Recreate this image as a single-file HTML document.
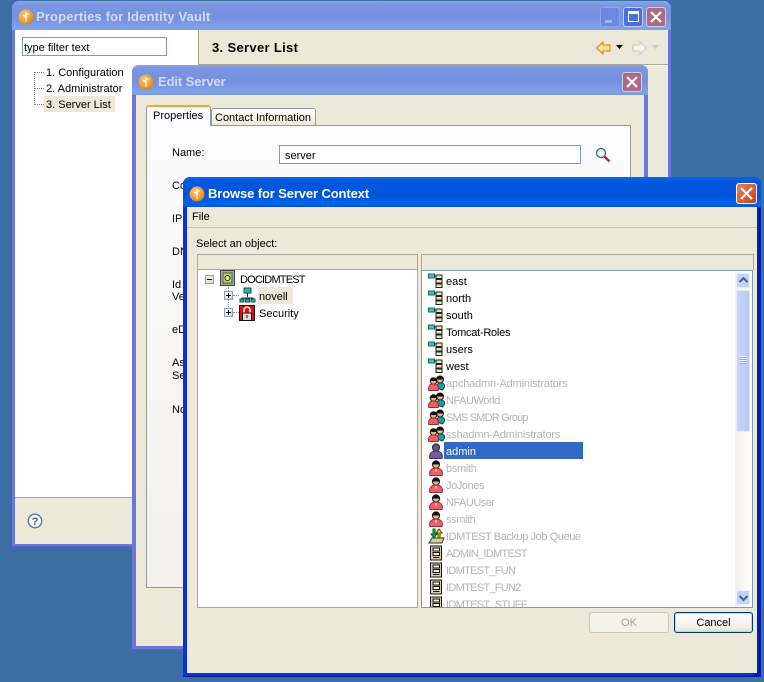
<!DOCTYPE html>
<html><head><meta charset="utf-8">
<style>
html,body{margin:0;padding:0;width:764px;height:682px;overflow:hidden;background:#3a6ea5}
*{box-sizing:border-box}
.a{position:absolute}
.t{position:absolute;white-space:nowrap;font:11px/14px "Liberation Sans",sans-serif;color:#000;margin-top:1px}
.g{color:#b4b4b4}
.title{position:absolute;white-space:nowrap;font:bold 13px/16px "Liberation Sans",sans-serif}
.in{background:linear-gradient(#8aa3e6 0,#7b97e2 4px,#7590df 16px,#7fa2e8 27px,#7b9ae0 30px)}
.ac{background:linear-gradient(#0a66e8 0,#0058e0 4px,#0054d8 18px,#0064ec 27px,#0050d8 30px)}
.btn{position:absolute;width:20px;height:20px;border:1px solid #c8d0ee;border-radius:3px}
svg{position:absolute;overflow:visible}
.sq{position:absolute;width:9px;height:9px;border:1px solid #8ba0b8;background:linear-gradient(135deg,#fff,#d8d4c8)}
</style></head><body>
<svg width="0" height="0" style="position:absolute">
<defs>
<radialGradient id="og" cx=".4" cy=".35" r=".7"><stop offset="0" stop-color="#ffc878"/><stop offset=".7" stop-color="#f09a28"/><stop offset="1" stop-color="#d87a10"/></radialGradient>
<symbol id="logo" viewBox="0 0 16 16"><circle cx="8" cy="8" r="7.5" fill="url(#og)"/><path d="M8 3v10M8 6l3-1.5M8 8L5 6" stroke="#fff" stroke-width="1.2" fill="none"/></symbol>
<symbol id="ou" viewBox="0 0 16 16"><rect x="0.5" y="1" width="6" height="4" fill="#3cc4c4" stroke="#1a6a6a"/><path d="M8 2h6v3.500h-6zM8 6.500h6v3.500h-6zM8 11h6v3.500h-6z" fill="#e8e4c0" stroke="#222"/><path d="M6 3H8" stroke="#222"/></symbol>
<symbol id="group" viewBox="0 0 17 16"><circle cx="12" cy="4.500" r="3.500" fill="#e8b090" stroke="#111"/><path d="M12 1a3.500 3.500 0 0 1 3.500 3.500h-7A3.500 3.500 0 0 1 12 1z" fill="#111"/><path d="M9 13c0-4 1-5 3.500-5s4.500 1 4 4l-2 3z" fill="#16a0a8" stroke="#0a4a50"/><circle cx="5.500" cy="6" r="3.300" fill="#e8b090" stroke="#111"/><path d="M5.500 2.500A3.300 3.300 0 0 1 8.800 6H2.200a3.300 3.300 0 0 1 3.300-3.500z" fill="#111"/><path d="M.8 15.500C-.2 11 2 9 5.500 9s5.700 2 4.700 6.500z" fill="#f06060" stroke="#a02838"/></symbol>
<symbol id="user" viewBox="0 0 16 16"><circle cx="8" cy="4.500" r="3.600" fill="#e8b090" stroke="#111"/><path d="M8 .8a3.700 3.700 0 0 1 3.700 3.700H4.300A3.700 3.700 0 0 1 8 .8z" fill="#111"/><path d="M2 15.500C.5 11 3.500 8 8 8s7.500 3 6 7.500z" fill="#f06060" stroke="#a02838"/><path d="M8 9v3" stroke="#fff"/></symbol>
<symbol id="print" viewBox="0 0 16 16"><path d="M2.500 1h11v14h-11z" fill="#d8d4b0" stroke="#111"/><path d="M5 3h6.500v3H5zM5 7.500h6.500v3H5z" fill="#f4f2e0" stroke="#111"/><path d="M5 12.500h6.500" stroke="#111"/></symbol>
</defs>
</svg>

<!-- Window 1 -->
<div class="a" style="left:12px;top:1px;width:659px;height:546px;background:#6b76d6;border-radius:7px 7px 0 0;border-bottom:1px solid #5a62c0"></div>
<div class="a in" style="left:12px;top:1px;width:659px;height:29px;border-radius:7px 7px 0 0"></div>
<svg style="left:18px;top:9px" width="16" height="16"><use href="#logo"/></svg>
<div class="title" style="left:36px;top:9px;color:#d2dcf8;letter-spacing:.16px">Properties for Identity Vault</div>
<div class="btn" style="left:600px;top:7px;background:#6a88e0;border-color:#90a4e6"><div class="a" style="left:4px;top:12px;width:7px;height:3px;background:#a0b4ee"></div></div>
<div class="btn" style="left:623px;top:7px;background:#4a70dc"><div class="a" style="left:4px;top:3px;width:11px;height:11px;border:1px solid #fff;border-top-width:3px"></div></div>
<div class="btn" style="left:646px;top:7px;background:#ae6a80"><svg style="left:3px;top:3px" width="12" height="12"><path d="M1 1l10 10M11 1L1 11" stroke="#fff" stroke-width="2.200"/></svg></div>
<div class="a" style="left:15px;top:30px;width:653px;height:514px;background:#ece9d8"></div>
<div class="a" style="left:15px;top:30px;width:184px;height:467px;background:#fff;border-right:1px solid #aca899"></div>
<div class="a" style="left:199px;top:64px;width:469px;height:2px;background:linear-gradient(#aca899 50%,#fff 50%)"></div>
<div class="a" style="left:15px;top:497px;width:184px;height:1px;background:#aca899"></div>
<div class="a" style="left:22px;top:37px;width:145px;height:19px;border:1px solid #7f9db9;background:#fff"></div>
<div class="t" style="left:24px;top:40px">type filter text</div>
<div class="a" style="left:34px;top:72px;height:33px;border-left:1px dotted #8a8a80"></div>
<div class="a" style="left:34px;top:72px;width:10px;border-top:1px dotted #8a8a80"></div>
<div class="a" style="left:34px;top:88px;width:10px;border-top:1px dotted #8a8a80"></div>
<div class="a" style="left:34px;top:104px;width:10px;border-top:1px dotted #8a8a80"></div>
<div class="a" style="left:44px;top:96px;width:71px;height:16px;background:#ece9d8"></div>
<div class="t" style="left:46px;top:65px">1. Configuration</div>
<div class="t" style="left:46px;top:81px">2. Administrator</div>
<div class="t" style="left:46px;top:97px">3. Server List</div>
<div class="title" style="left:212px;top:40px;color:#000;letter-spacing:.33px">3. Server List</div>
<svg style="left:596px;top:41px" width="15" height="14"><path d="M.5 7L7 1v3h7v6H7v3z" fill="#fcdc90" stroke="#c88a10"/></svg>
<svg style="left:616px;top:45px" width="7" height="5"><path d="M0 0h7L3.500 4z" fill="#000"/></svg>
<svg style="left:632px;top:41px" width="15" height="14"><path d="M14.500 7L8 1v3H1v6h7v3z" fill="#f4f4f0" stroke="#c8c8c4"/></svg>
<svg style="left:652px;top:45px" width="7" height="5"><path d="M0 0h7L3.500 4z" fill="#c8c8c4"/></svg>
<svg style="left:27px;top:513px" width="16" height="16"><circle cx="8" cy="8" r="6.700" fill="#fff" stroke="#5e7a9c" stroke-width="1.500"/><text x="8" y="12" text-anchor="middle" font-family="Liberation Sans" font-weight="bold" font-size="11" fill="#3a5a80">?</text></svg>

<!-- Window 2 -->
<div class="a" style="left:132px;top:65px;width:516px;height:585px;background:#6b76d6;border-radius:7px 7px 0 0;border-bottom:1px solid #5a62c0"></div>
<div class="a in" style="left:132px;top:65px;width:516px;height:30px;border-radius:7px 7px 0 0"></div>
<svg style="left:138px;top:74px" width="16" height="16"><use href="#logo"/></svg>
<div class="title" style="left:158px;top:74px;color:#d2dcf8;letter-spacing:-.1px">Edit Server</div>
<div class="btn" style="left:622px;top:72px;background:#ae6a80"><svg style="left:3px;top:3px" width="12" height="12"><path d="M1 1l10 10M11 1L1 11" stroke="#fff" stroke-width="2.200"/></svg></div>
<div class="a" style="left:136px;top:95px;width:508px;height:551px;background:#ece9d8"></div>
<div class="a" style="left:146px;top:125px;width:485px;height:463px;border:1px solid #919b9c;background:linear-gradient(#fcfcfe,#f3f1ec)"></div>
<div class="a" style="left:211px;top:108px;width:105px;height:18px;border:1px solid #919b9c;border-radius:3px 3px 0 0;background:linear-gradient(#fff,#ece9d8)"></div>
<div class="t" style="left:215px;top:110px">Contact Information</div>
<div class="a" style="left:146px;top:105px;width:65px;height:21px;border:1px solid #919b9c;border-top:2px solid #f0a830;border-bottom:0;border-radius:3px 3px 0 0;background:#fcfcfe"></div>
<div class="t" style="left:153px;top:108px">Properties</div>
<div class="t" style="left:172px;top:145px">Name:</div>
<div class="a" style="left:279px;top:145px;width:302px;height:19px;border:1px solid #7f9db9;background:#fff"></div>
<div class="t" style="left:285px;top:148px">server</div>
<svg style="left:595px;top:147px" width="16" height="16"><circle cx="6" cy="6" r="4.500" fill="#f4f8fc" stroke="#2a6a90" stroke-width="1.300"/><path d="M9.500 9.500l5 5" stroke="#d01840" stroke-width="2.400"/></svg>
<div class="t" style="left:172px;top:178px">Co</div>
<div class="t" style="left:172px;top:211px">IP</div>
<div class="t" style="left:172px;top:244px">DN</div>
<div class="t" style="left:172px;top:277px">Id</div>
<div class="t" style="left:172px;top:289px">Ve</div>
<div class="t" style="left:172px;top:322px">eD</div>
<div class="t" style="left:172px;top:355px">As</div>
<div class="t" style="left:172px;top:368px">Se</div>
<div class="t" style="left:172px;top:402px">No</div>

<!-- Window 3 -->
<div class="a" style="left:183px;top:177px;width:578px;height:500px;background:linear-gradient(90deg,#0831d9 0,#0831d9 98%,#0019a8 100%);border-radius:7px 7px 0 0;border-bottom:1px solid #001a90"></div>
<div class="a ac" style="left:183px;top:177px;width:578px;height:30px;border-radius:7px 7px 0 0"></div>
<svg style="left:189px;top:186px" width="16" height="16"><use href="#logo"/></svg>
<div class="title" style="left:208px;top:186px;color:#fff;letter-spacing:-.12px">Browse for Server Context</div>
<div class="btn" style="left:736px;top:183px;width:21px;height:21px;background:linear-gradient(135deg,#e88060,#d03c10);border-color:#fff"><svg style="left:3px;top:3px" width="13" height="13"><path d="M1 1l11 11M12 1L1 12" stroke="#fff" stroke-width="2.200"/></svg></div>
<div class="a" style="left:187px;top:207px;width:570px;height:466px;background:#ece9d8"></div>
<div class="a" style="left:187px;top:227px;width:570px;height:1px;background:#c8c6bc"></div>
<div class="t" style="left:192px;top:209px">File</div>
<div class="t" style="left:196px;top:236px">Select an object:</div>

<!-- left pane -->
<div class="a" style="left:197px;top:254px;width:221px;height:354px;border:1px solid #aca899;background:#fff"></div>
<div class="a" style="left:198px;top:255px;width:219px;height:15px;background:#ece9d8;border-bottom:1px solid #aca899"></div>
<div class="a" style="left:228px;top:287px;height:26px;border-left:1px dotted #8a8a80"></div>
<div class="a" style="left:233px;top:295px;width:6px;border-top:1px dotted #8a8a80"></div>
<div class="a" style="left:233px;top:312px;width:6px;border-top:1px dotted #8a8a80"></div>
<div class="sq" style="left:205px;top:275px"><div class="a" style="left:1px;top:3px;width:5px;height:1px;background:#000"></div></div>
<div class="sq" style="left:224px;top:291px"><div class="a" style="left:1px;top:3px;width:5px;height:1px;background:#000"></div><div class="a" style="left:3px;top:1px;width:1px;height:5px;background:#000"></div></div>
<div class="sq" style="left:224px;top:308px"><div class="a" style="left:1px;top:3px;width:5px;height:1px;background:#000"></div><div class="a" style="left:3px;top:1px;width:1px;height:5px;background:#000"></div></div>
<svg style="left:220px;top:270px" width="15" height="16"><rect x=".5" y=".5" width="14" height="15" fill="#a8a89c" stroke="#444"/><rect x="3" y="3" width="9" height="10" fill="#c8d060" stroke="#364"/><circle cx="7.500" cy="8" r="2.500" fill="#f0e8a0" stroke="#222"/></svg>
<div class="t" style="left:240px;top:272px;letter-spacing:-.8px">DOCIDMTEST</div>
<svg style="left:239px;top:287px" width="17" height="16"><path d="M8.500 6v4M3 14v-3h11v3M8.500 11v2" stroke="#223" fill="none"/><rect x="5" y="1" width="7" height="5" fill="#38b0a8" stroke="#154"/><rect x="1" y="12" width="4" height="3" fill="#38b0a8" stroke="#154"/><rect x="6.500" y="12" width="4" height="3" fill="#38b0a8" stroke="#154"/><rect x="12" y="12" width="4" height="3" fill="#38b0a8" stroke="#154"/></svg>
<div class="a" style="left:258px;top:287px;width:35px;height:17px;background:#ece9d8"></div>
<div class="t" style="left:259px;top:289px">novell</div>
<svg style="left:239px;top:305px" width="16" height="16"><rect x=".5" y=".5" width="15" height="15" fill="#e01010" stroke="#111"/><path d="M5 8V5a3 3 0 0 1 6 0v3" stroke="#fff" stroke-width="1.500" fill="none"/><rect x="3.500" y="8" width="9" height="7.500" fill="#ddd" stroke="#111"/><path d="M8 10v3" stroke="#111"/></svg>
<div class="t" style="left:259px;top:306px">Security</div>

<!-- right pane -->
<div class="a" style="left:421px;top:254px;width:333px;height:16px;border:1px solid #aca899;border-bottom:0;background:#ece9d8"></div>
<div class="a" style="left:421px;top:270px;width:332px;height:338px;border:1px solid #7f9db9;background:#fff"></div>
<div class="a" style="left:422px;top:271px;width:330px;height:336px;overflow:hidden">
<svg style="left:6px;top:2px" width="16" height="16"><use href="#ou"/></svg><div class="t" style="left:24px;top:3px">east</div>
<svg style="left:6px;top:19px" width="16" height="16"><use href="#ou"/></svg><div class="t" style="left:24px;top:20px">north</div>
<svg style="left:6px;top:36px" width="16" height="16"><use href="#ou"/></svg><div class="t" style="left:24px;top:37px">south</div>
<svg style="left:6px;top:53px" width="16" height="16"><use href="#ou"/></svg><div class="t" style="left:24px;top:54px;letter-spacing:-.25px">Tomcat-Roles</div>
<svg style="left:6px;top:70px" width="16" height="16"><use href="#ou"/></svg><div class="t" style="left:24px;top:71px">users</div>
<svg style="left:6px;top:87px" width="16" height="16"><use href="#ou"/></svg><div class="t" style="left:24px;top:88px">west</div>
<svg style="left:6px;top:104px" width="17" height="16"><use href="#group"/></svg><div class="t g" style="left:24px;top:105px;letter-spacing:-.17px">apchadmn-Administrators</div>
<svg style="left:6px;top:121px" width="17" height="16"><use href="#group"/></svg><div class="t g" style="left:24px;top:122px;letter-spacing:-.45px">NFAUWorld</div>
<svg style="left:6px;top:138px" width="17" height="16"><use href="#group"/></svg><div class="t g" style="left:24px;top:139px;letter-spacing:-.8px">SMS SMDR Group</div>
<svg style="left:6px;top:155px" width="17" height="16"><use href="#group"/></svg><div class="t g" style="left:24px;top:156px;letter-spacing:-.2px">sshadmn-Administrators</div>
<svg style="left:6px;top:172px" width="16" height="16"><circle cx="8" cy="4.500" r="3.600" fill="#5a5a78" stroke="#223"/><path d="M2 15.500C.5 11 3.500 8 8 8s7.500 3 6 7.500z" fill="#7a5aa0" stroke="#403060"/></svg>
<div class="a" style="left:22px;top:171px;width:139px;height:17px;background:#316ac5"></div>
<div class="t" style="left:24px;top:173px;color:#fff">admin</div>
<svg style="left:6px;top:189px" width="16" height="16"><use href="#user"/></svg><div class="t g" style="left:24px;top:190px;letter-spacing:-.3px">bsmith</div>
<svg style="left:6px;top:206px" width="16" height="16"><use href="#user"/></svg><div class="t g" style="left:24px;top:207px;letter-spacing:-.4px">JoJones</div>
<svg style="left:6px;top:223px" width="16" height="16"><use href="#user"/></svg><div class="t g" style="left:24px;top:224px;letter-spacing:-.5px">NFAUUser</div>
<svg style="left:6px;top:240px" width="16" height="16"><use href="#user"/></svg><div class="t g" style="left:24px;top:241px;letter-spacing:-.4px">ssmith</div>
<svg style="left:6px;top:257px" width="17" height="16"><path d="M1 15l3-5h12l-2 5z" fill="#d8d090" stroke="#333"/><path d="M5 1v5H3l3 4 3-4H7V1z" fill="#18b040" stroke="#063"/><path d="M12 10V5h2l-3-4-3 4h2v5z" fill="#f8d020" stroke="#540"/></svg><div class="t g" style="left:24px;top:258px;letter-spacing:-.42px">IDMTEST Backup Job Queue</div>
<svg style="left:6px;top:274px" width="16" height="16"><use href="#print"/></svg><div class="t g" style="left:24px;top:275px;letter-spacing:-.7px">ADMIN_IDMTEST</div>
<svg style="left:6px;top:291px" width="16" height="16"><use href="#print"/></svg><div class="t g" style="left:24px;top:292px;letter-spacing:-.7px">IDMTEST_FUN</div>
<svg style="left:6px;top:308px" width="16" height="16"><use href="#print"/></svg><div class="t g" style="left:24px;top:309px;letter-spacing:-.7px">IDMTEST_FUN2</div>
<svg style="left:6px;top:325px" width="16" height="16"><use href="#print"/></svg><div class="t g" style="left:24px;top:326px;letter-spacing:-.7px">IDMTEST_STUFF</div>
</div>

<!-- scrollbar -->
<div class="a" style="left:735px;top:272px;width:17px;height:335px;background:linear-gradient(90deg,#f3f1ec,#fefefb)"></div>
<div class="a" style="left:736px;top:273px;width:14px;height:15px;background:#c2d2f8;border:1px solid #e8eefc;border-radius:2px"><svg style="left:2px;top:3px" width="9" height="6"><path d="M.5 5L4.500 1l4 4" stroke="#4d6185" stroke-width="2" fill="none"/></svg></div>
<div class="a" style="left:736px;top:290px;width:14px;height:142px;background:linear-gradient(90deg,#c8d6fa,#bccdf6 80%,#b0c4f0);border:1px solid #e4ecfc;border-radius:2px"></div>
<div class="a" style="left:739px;top:356px;width:7px;height:8px;background:repeating-linear-gradient(#eef2fe 0,#eef2fe 1px,#8fabe8 1px,#8fabe8 2px)"></div>
<div class="a" style="left:736px;top:590px;width:14px;height:15px;background:#c2d2f8;border:1px solid #e8eefc;border-radius:2px"><svg style="left:2px;top:4px" width="9" height="6"><path d="M.5 1L4.500 5l4-4" stroke="#4d6185" stroke-width="2" fill="none"/></svg></div>

<!-- buttons -->
<div class="a" style="left:589px;top:612px;width:80px;height:21px;border:1px solid #c9c7ba;border-radius:3px;background:#f4f3ea"></div>
<div class="t" style="left:589px;top:615px;width:80px;text-align:center;color:#a5a294">OK</div>
<div class="a" style="left:674px;top:612px;width:79px;height:21px;border:1px solid #003c74;border-radius:3px;background:linear-gradient(#fefefc,#f2f0e6 80%,#dcd8c8);box-shadow:inset 0 0 0 1px #c4d4ee"></div>
<div class="t" style="left:674px;top:615px;width:79px;text-align:center">Cancel</div>
</body></html>
